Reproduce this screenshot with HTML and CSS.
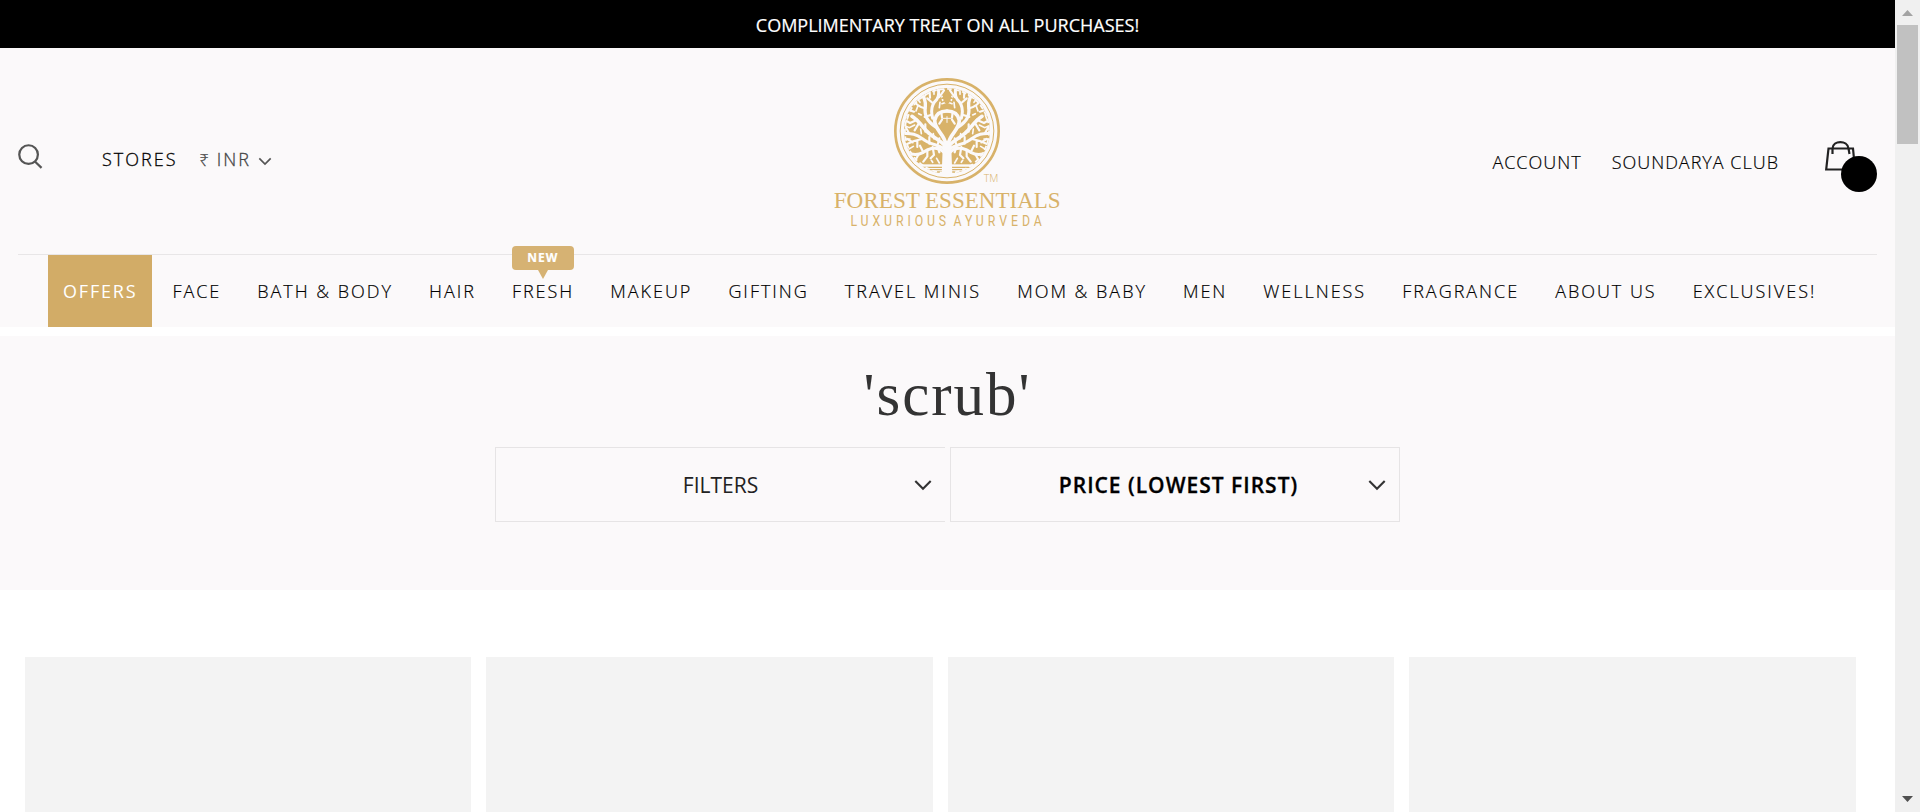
FILE: index.html
```html
<!DOCTYPE html>
<html lang="en">
<head>
<meta charset="utf-8">
<title>Forest Essentials - scrub</title>
<link rel="stylesheet" href="styles.css">
</head>
<body>
<div class="window">
<div class="page">
  <div class="promo"><span>COMPLIMENTARY TREAT ON ALL PURCHASES!</span></div>
  <header class="header">
    <div class="masthead">
      <div class="tools">
        <svg class="search" viewBox="0 0 26 26"><circle cx="11" cy="11" r="9.7"/><path d="M17.6 18.2 24.5 24.8"/></svg>
        <a class="stores">STORES</a>
        <a class="currency"><span class="rupee">₹</span> INR</a>
        <svg class="chev small" viewBox="0 0 16 10"><path d="M1.5 1.5 8 8 14.5 1.5"/></svg>
      </div>
      <svg class="logo" viewBox="0 0 780 525">
        <defs>
          <clipPath id="disc"><circle cx="381" cy="198" r="129"/></clipPath>
          <g id="half">
            <path d="M383 250C392 228 418 222 436 204 452 190 462 170 486 154" stroke-width="11"/>
            <path d="M386 252C410 238 436 238 456 220 472 208 486 204 516 206" stroke-width="9"/>
            <path d="M390 262C408 244 432 248 452 262 470 272 486 270 500 262" stroke-width="9"/>
            <path d="M384 240C388 206 418 196 418 166 414 146 398 138 381 138" stroke-width="11"/>
            <path d="M415 186C440 168 450 154 446 124 444 108 450 96 458 84" stroke-width="10"/>
            <path d="M424 160C430 138 430 120 412 104 406 96 404 84 408 66" stroke-width="9"/>
            <path d="M446 130C462 128 476 118 486 100M432 98 434 66M424 114 440 100M404 96 390 76M446 178 446 200M470 164 492 174 516 160M466 176 478 196M448 156 430 150M456 222 480 228 508 240M434 236 434 216M408 236 404 220M470 226 470 246M452 262 462 242M424 246 420 270 430 280M440 254 440 274 452 290M466 268 476 286M408 248 404 262M404 176 396 164M398 141 396 158M480 140 504 132M456 96 470 104M494 206 504 188M484 232 500 222" stroke-width="6.500"/>
            <path d="M420 88 420 64M446 92 448 70M468 122 474 138M462 112 474 96M484 120 496 116M478 180 494 188 512 180M492 222 516 222M482 244 498 254M486 268 494 282M496 150 500 162M458 150 466 146M420 222 422 206M460 192 458 206M402 112 404 128M396 94 394 106M424 292 428 286M412 280 404 294M384 112 396 116" stroke-width="5"/>
          </g>
        </defs>
        <circle cx="381" cy="198" r="155" class="ring thick"/>
        <circle cx="381" cy="198" r="140.500" class="ring thin"/>
        <g clip-path="url(#disc)">
          <rect x="240" y="60" width="282" height="238" class="gold"/>
          <path class="gold" d="M298 305h166v4H298zM315 312h132v4H315zM334 319h94v4H334z"/>
          <g class="branch">
            <use href="#half"/>
            <use href="#half" transform="translate(762 0) scale(-1 1)"/>
            <path d="M381 155v18M370 160h22" stroke-width="3"/>
          </g>
          <path class="gold" d="m381 172 12 20-12 18-12-18zM381 84l19 18h-12v12h-14v-12h-12z"/>
          <path class="trunk" d="M374 222 381 230 388 222 394 250 397 330H365L368 250z"/>
          <circle cx="381" cy="198" r="127" class="rim"/>
        </g>
        <text x="491" y="350" class="tm" textLength="44" lengthAdjust="spacingAndGlyphs">TM</text>
        <text x="41" y="429" class="brand" textLength="259" lengthAdjust="spacingAndGlyphs">FOREST</text>
        <text x="315" y="429" class="brand" textLength="407" lengthAdjust="spacingAndGlyphs">ESSENTIALS</text>
        <g transform="scale(.8 1)">
          <text x="114" y="483" class="tagline" textLength="359">LUXURIOUS</text>
          <text x="501" y="483" class="tagline" textLength="331">AYURVEDA</text>
        </g>
      </svg>
      <div class="account">
        <a>ACCOUNT</a>
        <a>SOUNDARYA CLUB</a>
        <div class="bag">
          <svg viewBox="0 0 32 32"><path d="M3.500 8.500H28L30 29.500H1.200zM7.500 14V8.500C8 0 22.500 0 23.500 8.500L24.500 14"/></svg>
          <i class="count"></i>
        </div>
      </div>
    </div>
    <nav class="nav">
      <a class="offers">OFFERS</a><a>FACE</a><a>BATH &amp; BODY</a><a>HAIR</a><a class="fresh">FRESH<span class="badge">NEW</span></a><a>MAKEUP</a><a>GIFTING</a><a>TRAVEL MINIS</a><a>MOM &amp; BABY</a><a>MEN</a><a>WELLNESS</a><a>FRAGRANCE</a><a>ABOUT US</a><a>EXCLUSIVES!</a>
    </nav>
  </header>
  <section class="results">
    <h1>'scrub'</h1>
    <div class="selects">
      <div class="select filters"><span>FILTERS</span><svg class="chev" viewBox="0 0 16 10"><path d="M1 1 8 8 15 1"/></svg></div>
      <div class="select sort"><span>PRICE (LOWEST FIRST)</span><svg class="chev" viewBox="0 0 16 10"><path d="M1 1 8 8 15 1"/></svg></div>
    </div>
  </section>
  <main class="grid"><div></div><div></div><div></div><div></div></main>
</div>
<div class="scrollbar">
  <svg viewBox="0 0 11 6"><path d="M0 6 5.500 0 11 6z" fill="#a3a3a3"/></svg>
  <div class="thumb"></div>
  <svg class="down" viewBox="0 0 11 6"><path d="M0 0 5.500 6 11 0z" fill="#505050"/></svg>
</div>
</div>
</body>
</html>
```

FILE: styles.css
```css
* { box-sizing: border-box; }
body { margin: 0; background: #fff; font-family: "Open Sans", "Noto Sans", sans-serif; color: #000; overflow: hidden; }
.window { display: flex; height: 812px; overflow: hidden; }
.page { width: 1895px; height: 812px; overflow: hidden; }
.promo { height: 48px; background: #000; color: #fff; text-align: center; font-size: 18px; line-height: 51px; -webkit-text-stroke: .2px; }
.header { height: 279px; background: #fbf9fa; padding: 0 18px; }
.masthead { height: 207px; border-bottom: 1px solid #e8e6e7; display: flex; align-items: flex-start; }
.tools { display: flex; flex: none; width: 802px; padding-top: 96px; font-size: 18px; line-height: 30px; font-weight: 300; letter-spacing: 2px; white-space: nowrap; -webkit-text-stroke: .3px; }
.search { width: 25px; height: 25px; fill: none; stroke: #555; stroke-width: 2.3; }
.stores { margin-left: 59px; }
.currency { margin-left: 22px; color: #444; }
.rupee { font-size: 16px; letter-spacing: 1.5px; }
.chev { width: 18px; height: 11px; fill: none; stroke: #333; stroke-width: 1.9; }
.chev.small { width: 14px; height: 9px; margin: 13px 0 0 7px; stroke: #555; }
.logo { width: 260px; height: 175px; margin-top: 17px; flex: none; }
.gold { fill: #d8b269; }
.ring { fill: none; stroke: #d8b269; }
.thick { stroke-width: 8; }
.thin { stroke-width: 3; }
.branch { fill: none; stroke: #fbf9fa; stroke-linecap: round; }
.trunk { fill: #fbf9fa; }
.rim { fill: none; stroke: #fbf9fa; stroke-width: 7; stroke-dasharray: 14 9; }
.tm { font: 300 32px "Open Sans", sans-serif; fill: #d8b269; }
.brand { font: 70px "Liberation Serif", serif; fill: #d8b269; }
.tagline { font: 46px Roboto, sans-serif; fill: #d8b269; }
.account { flex: 1; display: flex; justify-content: flex-end; padding-top: 92px; font-size: 18px; line-height: 44px; font-weight: 300; letter-spacing: 1px; white-space: nowrap; -webkit-text-stroke: .2px; }
.account a { margin-right: 30px; }
.bag { position: relative; width: 52px; height: 60px; margin-left: 16px; }
.bag svg { display: block; width: 32px; height: 32px; fill: none; stroke: #222; stroke-width: 2.2; }
.count { position: absolute; left: 16px; top: 16px; width: 36px; height: 36px; border-radius: 50%; background: #000; }
.nav { display: flex; height: 72px; padding-left: 30px; line-height: 73px; font-size: 18px; font-weight: 300; letter-spacing: 1.98px; white-space: nowrap; -webkit-text-stroke: .2px; }
.nav a { margin-right: 36px; color: #000; }
.nav .offers { padding: 0 15px; margin-right: 20px; background: #d2ac67; color: #fff; font-weight: 400; letter-spacing: 1.8px; -webkit-text-stroke: 0; }
.fresh { position: relative; }
.badge { position: absolute; left: 0; top: -9px; width: 62px; height: 24px; border-radius: 4px; background: #d6b273; color: #fff; font-size: 12px; line-height: 24px; font-weight: 700; letter-spacing: 1px; text-align: center; }
.badge::after { content: ""; position: absolute; left: 26px; top: 24px; border: 5.500px solid transparent; border-top: 9px solid #d6b273; border-bottom: 0; }
.results { height: 254px; margin-top: 9px; background: #fbf9fa; text-align: center; }
h1 { margin: 0; height: 111px; font: 300 61px/118px "Liberation Serif", serif; color: #333; letter-spacing: 2px; }
.selects { display: flex; gap: 5px; justify-content: center; }
.select { width: 450px; height: 75px; border: 1px solid #e6e4e5; display: grid; grid-template-columns: 1fr; align-items: center; font-size: 21px; }
.select > * { grid-area: 1 / 1; }
.select .chev { justify-self: end; margin: 2px 13px 0 0; }
.filters { border-right: 0; color: #222; }
.sort { font-weight: 600; letter-spacing: 1px; -webkit-text-stroke: .3px; }
.sort span { padding-left: 7px; }
.grid { display: grid; grid-template-columns: repeat(4, 1fr); gap: 15px; padding: 67px 39.5px 0 25px; }
.grid div { height: 155px; background: #f3f3f3; }
.scrollbar { width: 25px; background: #f0f0f0; display: flex; flex-direction: column; align-items: center; padding: 10px 1px 10px 0; }
.scrollbar svg { width: 11px; height: 6px; flex: none; }
.thumb { width: 21px; height: 119px; margin-top: 9px; background: #c1c1c1; }
.down { margin-top: auto; }
```
